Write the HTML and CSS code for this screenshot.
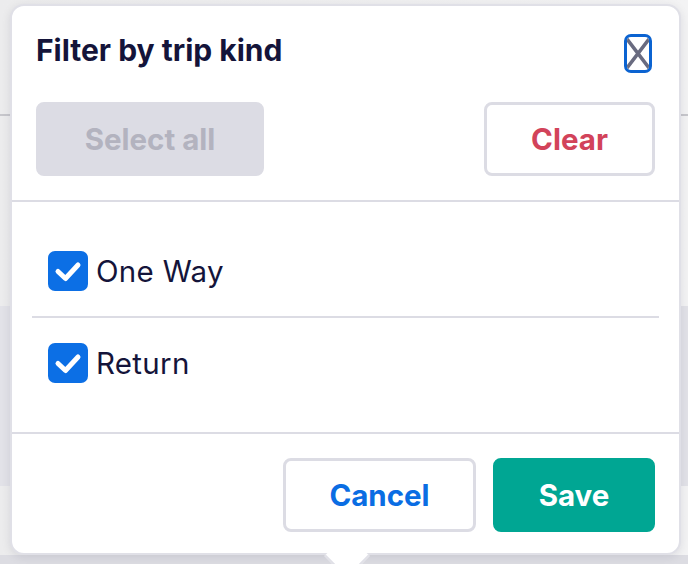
FILE: index.html
```html
<!DOCTYPE html>
<html lang="en">
<head>
<meta charset="utf-8">
<title>Filter by trip kind</title>
<link rel="stylesheet" href="styles.css">
</head>
<body>
<div class="page">
  <div class="bg-header"></div>
  <div class="bg-gap"></div>
  <div class="bg-band"></div>
  <div class="bg-rest"></div>
  <div class="bg-bottom"></div>
</div>

<div class="popover" role="dialog" aria-label="Filter by trip kind">
  <header class="pop-head">
    <h2 class="pop-title">Filter by trip kind</h2>
    <button class="close" aria-label="Close">
      <svg width="22" height="33" viewBox="0 0 22 33" aria-hidden="true">
        <path d="M0 2 L22 31 M22 2 L0 31" stroke="#696b80" stroke-width="3.6" stroke-linecap="butt" fill="none"/>
      </svg>
    </button>
  </header>

  <div class="bulk">
    <button class="btn btn-muted" disabled>Select all</button>
    <button class="btn btn-outline btn-danger">Clear</button>
  </div>

  <ul class="options">
    <li class="option">
      <label class="opt-label">
        <span class="check">
          <svg width="40" height="40" viewBox="0 0 40 40" aria-hidden="true">
            <path d="M10 20.5 L17.5 27.5 L30 14" stroke="#fff" stroke-width="5" stroke-linecap="round" stroke-linejoin="round" fill="none"/>
          </svg>
        </span>
        <span class="opt-text">One Way</span>
      </label>
    </li>
    <li class="option">
      <label class="opt-label">
        <span class="check">
          <svg width="40" height="40" viewBox="0 0 40 40" aria-hidden="true">
            <path d="M10 20.5 L17.5 27.5 L30 14" stroke="#fff" stroke-width="5" stroke-linecap="round" stroke-linejoin="round" fill="none"/>
          </svg>
        </span>
        <span class="opt-text">Return</span>
      </label>
    </li>
  </ul>

  <footer class="pop-foot">
    <button class="btn btn-outline btn-link">Cancel</button>
    <button class="btn btn-save">Save</button>
  </footer>

  <span class="caret"></span>
</div>
</body>
</html>
```

FILE: styles.css
```css
* { box-sizing: border-box; }

html, body {
  margin: 0;
  padding: 0;
}

body {
  width: 688px;
  height: 564px;
  overflow: hidden;
  background: #efeff1;
  font-family: Inter, "Liberation Sans", sans-serif;
  position: relative;
}

.page {
  display: flex;
  flex-direction: column;
  height: 564px;
}

.bg-header {
  height: 116px;
  background: linear-gradient(90deg, #ececed, #f3f3f4);
  border-bottom: 2px solid #c7c7cc;
}

.bg-gap {
  height: 190px;
  background: linear-gradient(90deg, #ececed, #f3f3f4);
}

.bg-band {
  height: 180px;
  background: #e2e2e8;
}

.bg-rest {
  height: 69px;
  background: linear-gradient(90deg, #ececed, #f3f3f4);
}

.bg-bottom {
  flex: 1;
  background: #dcdce2;
}

.popover {
  position: absolute;
  z-index: 1;
  left: 10px;
  top: 4px;
  width: 671px;
  height: 551px;
  background: #fff;
  border: 2px solid #e0e0e7;
  border-radius: 14px;
  box-shadow: 0 2px 10px rgba(20, 20, 50, 0.10);
  color: #14143a;
}

.pop-head {
  display: flex;
  justify-content: space-between;
  align-items: flex-start;
  padding: 26px 24px 0 24px;
  height: 67px;
}

.pop-title {
  margin: 0;
  font-size: 30px;
  line-height: 36px;
  font-weight: 700;
  letter-spacing: 0;
  color: #14143a;
}

.close {
  margin: 2px 3px 0 0;
  width: 28px;
  height: 39px;
  padding: 0;
  border: 3px solid #0b63d1;
  border-radius: 7px;
  background: #fff;
  display: flex;
  align-items: center;
  justify-content: center;
  overflow: hidden;
}

.close svg { display: block; }

.bulk {
  display: flex;
  justify-content: space-between;
  padding: 29px 24px 24px 24px;
}

.btn {
  height: 74px;
  padding: 0 40px;
  border: 3px solid transparent;
  border-radius: 8px;
  font-family: Inter, "Liberation Sans", sans-serif;
  font-size: 29.5px;
  font-weight: 700;
  letter-spacing: 0;
  background: #fff;
  cursor: pointer;
}

.btn-muted {
  background: #dcdce4;
  border-color: #dcdce4;
  color: #b3b3bf;
  width: 228px;
}

.btn-outline {
  border-color: #dcdce4;
  background: #fff;
}

.btn-danger {
  color: #d2435a;
  width: 171px;
}

.btn-link {
  color: #0a6de3;
  width: 193px;
}

.btn-save {
  background: #00a693;
  border-color: #00a693;
  color: #fff;
  width: 162px;
}

.options {
  list-style: none;
  margin: 0;
  padding: 24px 20px;
  border-top: 2px solid #dcdce4;
  border-bottom: 2px solid #dcdce4;
}

.option {
  height: 90px;
  display: flex;
  align-items: center;
  padding: 0 16px;
}

.option + .option {
  height: 92px;
  border-top: 2px solid #dcdce4;
}

.opt-label {
  display: flex;
  align-items: center;
  gap: 8px;
  cursor: pointer;
}

.check {
  width: 40px;
  height: 40px;
  border-radius: 7px;
  background: #0c6fe5;
  display: block;
}

.check svg { display: block; }

.opt-text {
  font-size: 29.5px;
  line-height: 36px;
  font-weight: 400;
  letter-spacing: 0.3px;
  color: #14143a;
}

.pop-foot {
  display: flex;
  justify-content: flex-end;
  gap: 17px;
  padding: 24px 24px 0 24px;
}

.caret {
  position: absolute;
  z-index: -1;
  left: 319px;
  bottom: -19px;
  width: 32px;
  height: 32px;
  background: #fff;
  transform: rotate(45deg);
  border-right: 2px solid #e0e0e7;
  border-bottom: 2px solid #e0e0e7;
}
```
